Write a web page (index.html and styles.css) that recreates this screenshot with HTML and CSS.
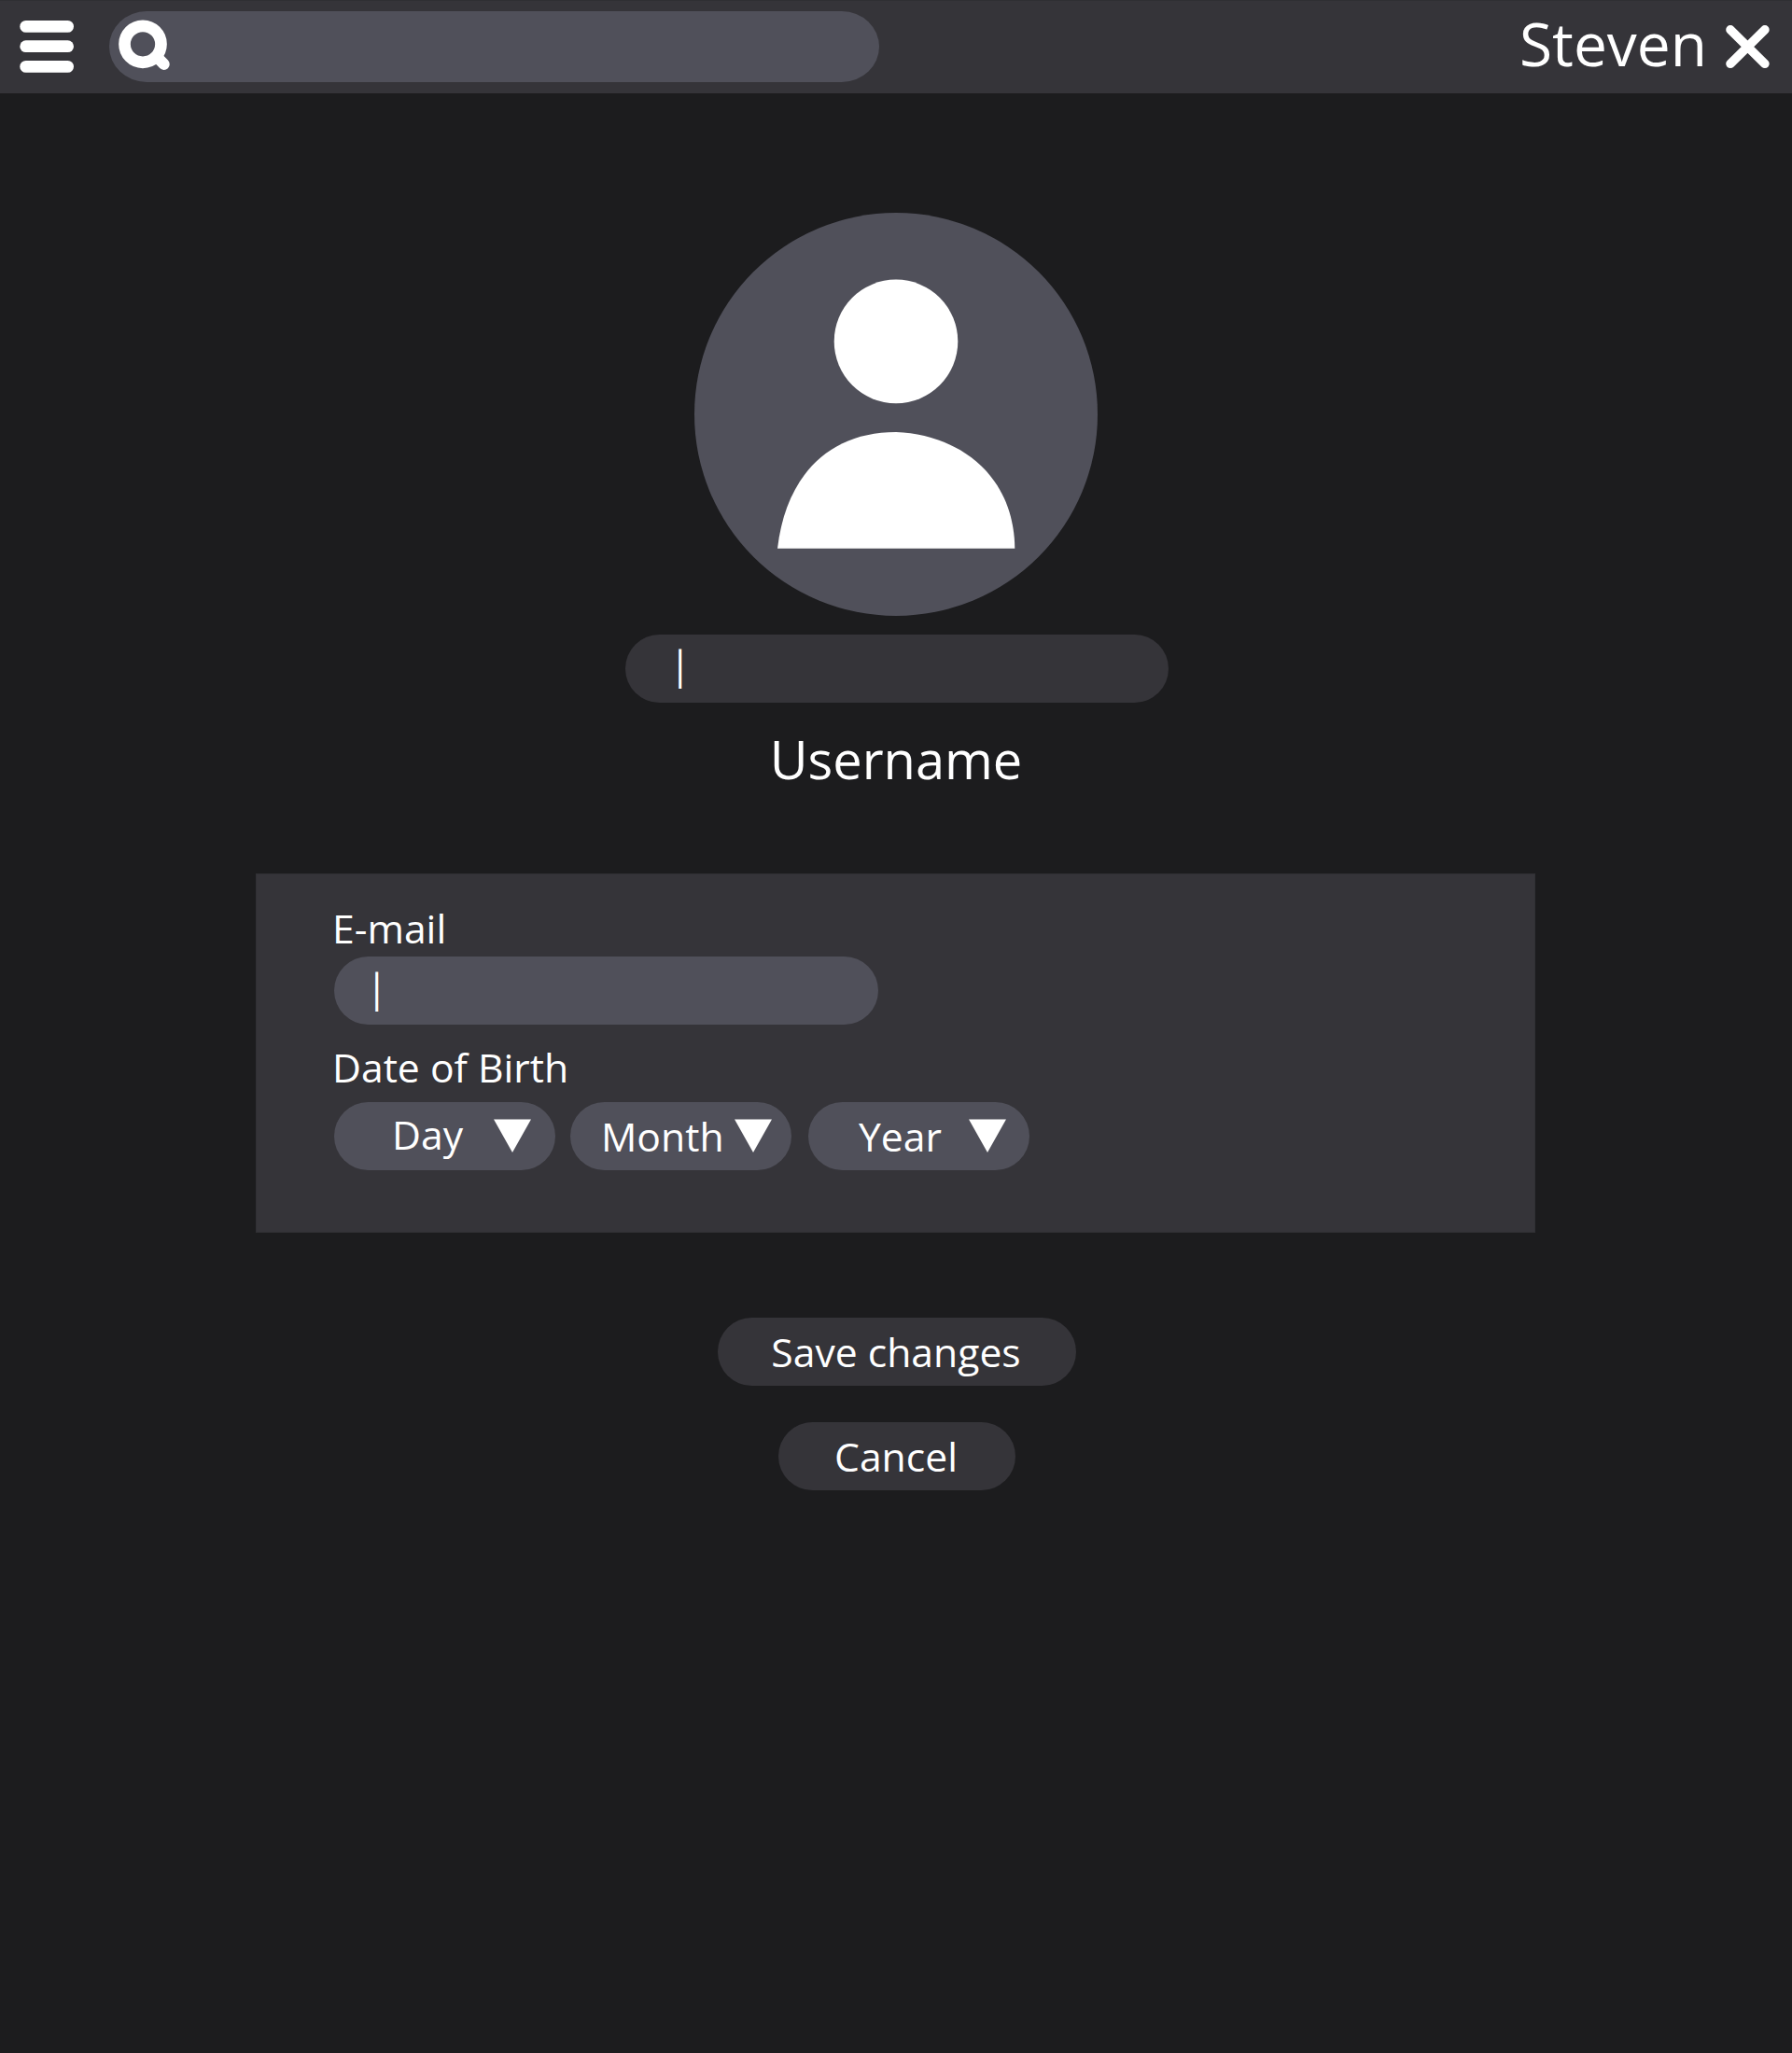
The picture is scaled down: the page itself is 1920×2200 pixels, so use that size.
FILE: index.html
```html
<!DOCTYPE html>
<html lang="en">
<head>
<meta charset="utf-8">
<title>Edit profile</title>
<link rel="stylesheet" href="styles.css">
</head>
<body>
<header class="topbar">
  <svg class="menu-icon" width="58" height="56" viewBox="0 0 58 56" fill="#fff">
    <rect x=".3" y="0" width="57.7" height="12.8" rx="6.4"/>
    <rect x=".3" y="21.3" width="57.7" height="12.7" rx="6.35"/>
    <rect x=".3" y="43" width="57.7" height="12.8" rx="6.4"/>
  </svg>
  <div class="search">
    <svg width="56" height="56" viewBox="0 0 56 56" fill="none" stroke="#fff">
      <circle cx="26" cy="26.3" r="19.5" stroke-width="12.7"/>
      <path d="M42 41L48.6 47.8" stroke-width="12.2" stroke-linecap="round"/>
    </svg>
  </div>
  <span class="user">Steven</span>
  <svg class="close-icon" width="48" height="48" viewBox="0 0 48 48" fill="none" stroke="#fff" stroke-width="9.6" stroke-linecap="round">
    <path d="M6 5.9L42.9 42.3M42.9 5.9L6 42.3"/>
  </svg>
</header>
<main class="profile">
  <svg class="avatar" width="432" height="432" viewBox="0 0 432 432">
    <circle cx="216" cy="216" r="216" fill="#50505a"/>
    <circle cx="216" cy="137.9" r="66.3" fill="#fff"/>
    <path d="M89 359.7C98 283 143 235 216 235C286 238 342.5 283 343.3 359.7Z" fill="#fff"/>
  </svg>
  <div class="field field-name">|</div>
  <h1 class="title">Username</h1>
  <section class="panel">
    <div class="label">E-mail</div>
    <div class="field field-email">|</div>
    <div class="label label-date">Date of Birth</div>
    <div class="selects">
      <div class="select day"><span>Day</span><svg width="40" height="36" viewBox="0 0 40 36"><path d="M0 .4H40L20 36Z" fill="#fff"/></svg></div>
      <div class="select month"><span>Month</span><svg width="40" height="36" viewBox="0 0 40 36"><path d="M0 .4H40L20 36Z" fill="#fff"/></svg></div>
      <div class="select year"><span>Year</span><svg width="40" height="36" viewBox="0 0 40 36"><path d="M0 .4H40L20 36Z" fill="#fff"/></svg></div>
    </div>
  </section>
  <button class="button save">Save changes</button>
  <button class="button cancel">Cancel</button>
</main>
</body>
</html>
```
FILE: styles.css
```css
* { box-sizing: border-box; }
body {
  margin: 0;
  min-height: 2200px;
  background: #1c1c1e;
  color: #fff;
  font-family: "Open Sans", sans-serif;
  font-size: 42.67px;
}
svg { display: block; flex: none; }
.topbar {
  display: flex;
  align-items: center;
  height: 100px;
  padding: 0 24px 0 21px;
  background: #353439;
  box-shadow: inset 0 1px #2f2f33;
}
.search {
  display: flex;
  align-items: center;
  width: 825px;
  height: 76px;
  margin-left: 38px;
  padding: 0 0 2px 10px;
  border-radius: 40px / 38px;
  background: #50505a;
}
.user {
  margin-left: auto;
  margin-right: 19px;
  padding-bottom: 6px;
  font-size: 64px;
  line-height: 80px;
}
.profile {
  display: flex;
  flex-direction: column;
  align-items: center;
}
.avatar { margin-top: 128px; }
.field {
  width: 582px;
  height: 73px;
  border-radius: 37px;
}
.field-name {
  margin: 20px 0 0 2px;
  padding-left: 47px;
  background: #353439;
  line-height: 64px;
}
.title {
  margin: 22px 0 0;
  font-size: 56px;
  font-weight: 400;
  line-height: 76px;
}
.panel {
  width: 1371px;
  height: 385px;
  margin: 85px 1px 0 0;
  padding: 29px 0 0 82px;
  background: #353439;
  box-shadow: inset 0 0 0 1px #303034;
}
.label { line-height: 59px; }
.field-email {
  width: 583px;
  margin: 1px 0 0 2px;
  padding-left: 34px;
  background: #50505a;
  line-height: 66px;
}
.label-date { margin-top: 16px; }
.selects {
  display: flex;
  margin: 8px 0 0 2px;
}
.select {
  display: flex;
  justify-content: space-between;
  width: 237px;
  height: 73px;
  border-radius: 37px;
  background: #50505a;
  line-height: 73px;
}
.select svg { margin-top: 18px; }
.day { padding: 0 26px 0 62px; }
.day span { line-height: 69px; }
.month { margin-left: 16px; padding: 0 21px 0 33px; }
.year { margin-left: 18px; padding: 0 25px 0 54px; }
.button {
  height: 73px;
  padding: 0 2px 0 0;
  border: 0;
  border-radius: 37px;
  background: #353439;
  color: inherit;
  font: inherit;
  line-height: 73px;
}
.save { width: 384px; margin: 91px 0 0 2px; }
.cancel { width: 254px; margin: 39px 0 0 2px; }
```
